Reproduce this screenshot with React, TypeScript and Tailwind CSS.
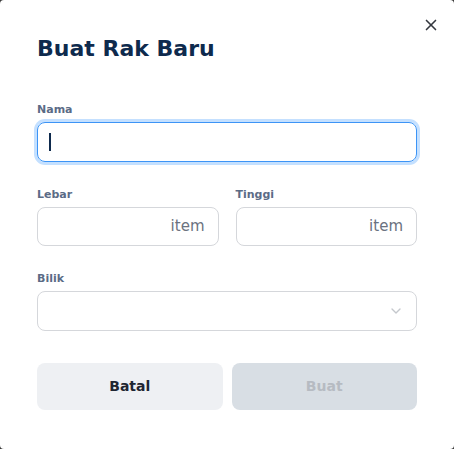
import { X, ChevronDown } from "lucide-react"

const font = { fontFamily: '"DejaVu Sans", "Open Sans", sans-serif' }

const Field = ({ label, children }: { label: string; children: React.ReactNode }) => (
  <div className="flex flex-col">
    <label className="text-[11px] font-semibold text-[#5b6b86] leading-[16px] mb-[4px]">{label}</label>
    {children}
  </div>
)

const App = () => {
  return (
    <div className="w-[454px] h-[449px] bg-[#3a3a3a]" style={font}>
      <div className="relative w-full h-full bg-white rounded-[4px] px-[37px] pt-[34px]">
        <button className="absolute right-[14px] top-[16px] text-[#33373e]">
          <X size={18} strokeWidth={2.2} />
        </button>

        <h2 className="text-[22px] font-bold text-[#0e2a4d] leading-[30px]">Buat Rak Baru</h2>

        <div className="mt-[38px] flex flex-col gap-[25px]">
          <Field label="Nama">
            <div className="h-[40px] rounded-[8px] border border-[#3c94f6] ring-[3px] ring-[#c4e0ff] flex items-center px-[11px]">
              <span className="w-[1.5px] h-[18px] bg-[#0e2a4d]" />
            </div>
          </Field>

          <div className="grid grid-cols-2 gap-[17px]">
            <Field label="Lebar">
              <div className="h-[39px] rounded-[8px] border border-[#d5d7db] flex items-center justify-end px-[13px]">
                <span className="text-[15px] text-[#6b7280]">item</span>
              </div>
            </Field>
            <Field label="Tinggi">
              <div className="h-[39px] rounded-[8px] border border-[#d5d7db] flex items-center justify-end px-[13px]">
                <span className="text-[15px] text-[#6b7280]">item</span>
              </div>
            </Field>
          </div>

          <Field label="Bilik">
            <div className="h-[40px] rounded-[8px] border border-[#d5d7db] flex items-center justify-end px-[12px]">
              <ChevronDown size={16} className="text-[#c4c7cc]" />
            </div>
          </Field>
        </div>

        <div className="mt-[32px] grid grid-cols-2 gap-[9px]">
          <button className="h-[47px] rounded-[8px] bg-[#eef0f3] text-[14px] font-semibold text-[#1f2632]">Batal</button>
          <button className="h-[47px] rounded-[8px] bg-[#d8dee4] text-[14px] font-semibold text-[#b6bbc2]">Buat</button>
        </div>
      </div>
    </div>
  )
}

export default App
